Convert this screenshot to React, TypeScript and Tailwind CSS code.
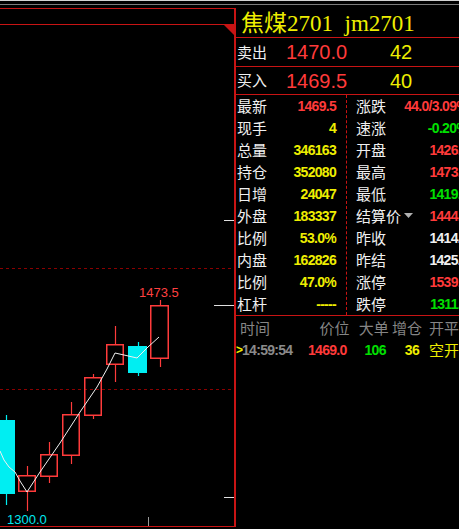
import React from "react";

const RED = "#ff3a3a";
const YELLOW = "#eeee00";
const GREEN = "#00e000";
const LINE = "#c81414";

type Candle = {
  x0: number;
  x1: number;
  top: number;
  bot: number;
  hi: number;
  lo: number;
  up: boolean;
};

// page coordinates, svg viewBox is shifted to match
const candles: Candle[] = [
  { x0: -3, x1: 15, top: 421, bot: 495, hi: 416, lo: 506, up: false },
  { x0: 18, x1: 36, top: 476, bot: 493, hi: 467, lo: 512, up: true },
  { x0: 40, x1: 58, top: 455, bot: 478, hi: 443, lo: 484, up: true },
  { x0: 62, x1: 80, top: 415, bot: 457, hi: 403, lo: 465, up: true },
  { x0: 84, x1: 102, top: 378, bot: 417, hi: 375, lo: 420, up: true },
  { x0: 106, x1: 124, top: 345, bot: 366, hi: 327, lo: 383, up: true },
  { x0: 128, x1: 147, top: 347, bot: 374, hi: 343, lo: 377, up: false },
  { x0: 150, x1: 169, top: 306, bot: 360, hi: 301, lo: 368, up: true },
];

const maLine =
  "0,452 4,461 9,468 15,473 20,482 27,493 40,473 60,444 80,413 97,388 107,370 115,354 124,356 137,359 148,348 159,338";

function KChart() {
  return (
    <svg width={234} height={501} viewBox="0 26 234 501" className="block">
      <polygon points="224,26 234,26 234,36" fill={LINE} />
      <line x1={0} y1={269.5} x2={234} y2={269.5} stroke="#8a0000" strokeDasharray="3 3" />
      <line x1={0} y1={390.5} x2={234} y2={390.5} stroke="#8a0000" strokeDasharray="3 3" />
      <line x1={224} y1={221.5} x2={234} y2={221.5} stroke="#e0e0e0" />
      <line x1={214} y1={306.5} x2={234} y2={306.5} stroke="#e0e0e0" />
      <line x1={224} y1={498.5} x2={234} y2={498.5} stroke="#e0e0e0" />
      <line x1={148.5} y1={518} x2={148.5} y2={527} stroke="#9a9a9a" />
      {candles.map((c, i) => {
        const cx = Math.round((c.x0 + c.x1) / 2) + 0.5;
        const color = c.up ? "#ff3b3b" : "#00eef2";
        return (
          <g key={i}>
            <line x1={cx} y1={c.hi} x2={cx} y2={c.top} stroke={color} strokeWidth={1.2} />
            <line x1={cx} y1={c.bot} x2={cx} y2={c.lo} stroke={color} strokeWidth={1.2} />
            {c.up ? (
              <rect
                x={c.x0 + 0.75}
                y={c.top + 0.75}
                width={c.x1 - c.x0 - 1.5}
                height={c.bot - c.top - 1.5}
                fill="none"
                stroke={color}
                strokeWidth={1.5}
              />
            ) : (
              <rect x={c.x0} y={c.top} width={c.x1 - c.x0} height={c.bot - c.top} fill={color} />
            )}
          </g>
        );
      })}
      <polyline points={maLine} fill="none" stroke="#f0f0f0" strokeWidth={1} />
      <text
        x={139}
        y={298}
        fill="#ff4040"
        fontSize={13}
        fontFamily="'Liberation Sans', Arial, sans-serif"
      >
        1473.5
      </text>
      <text
        x={7}
        y={525}
        fill="#00e8f0"
        fontSize={13}
        fontFamily="'Liberation Sans', Arial, sans-serif"
      >
        1300.0
      </text>
    </svg>
  );
}

const leftRows: [string, string, string][] = [
  ["最新", "1469.5", RED],
  ["现手", "4", YELLOW],
  ["总量", "346163", YELLOW],
  ["持仓", "352080", YELLOW],
  ["日增", "24047", YELLOW],
  ["外盘", "183337", YELLOW],
  ["比例", "53.0%", YELLOW],
  ["内盘", "162826", YELLOW],
  ["比例", "47.0%", YELLOW],
  ["杠杆", "-----", YELLOW],
];

const rightRows: [string, string, string][] = [
  ["涨跌", "44.0/3.09%", RED],
  ["速涨", "-0.20%", GREEN],
  ["开盘", "1426.0", RED],
  ["最高", "1473.5", RED],
  ["最低", "1419.0", GREEN],
  ["结算价", "1444.5", RED],
  ["昨收", "1414.0", "#f0f0f0"],
  ["昨结", "1425.0", "#f0f0f0"],
  ["涨停", "1539.0", RED],
  ["跌停", "1311.0", GREEN],
];

const cjk = "font-['Noto_Sans_CJK_SC',sans-serif]";
const num = "font-['Liberation_Sans',Arial,sans-serif] font-bold text-[14px] tracking-[-0.7px]";

export default function App() {
  return (
    <div className="w-[459px] h-[529px] bg-black overflow-hidden">
      {/* top window strip */}
      <div className="h-px bg-[#d2d2d2]" />
      <div className="h-[3px]" />
      <div className="h-px bg-[#7c7c7c]" />
      <div className="h-[3px]" />

      <div className="flex">
        {/* chart */}
        <div className="w-[236px] shrink-0 flex flex-col border-t border-b border-r-2 border-[#c81414]">
          <div className="h-[16px] border-b border-[#c81414]" />
          <KChart />
        </div>

        {/* quote panel */}
        <div className="flex-1 flex flex-col min-w-0">
          <div className="h-[30px] border-b border-[#c81414] flex items-center pl-[5px] pt-px">
            <span className="text-[23px] leading-none text-[#eeee00] whitespace-pre font-['Liberation_Serif','Noto_Sans_CJK_SC',serif]">
              焦煤2701  jm2701
            </span>
          </div>

          <div className="h-[29px] border-b border-[#c81414] flex items-center">
            <span className={`w-[50px] pl-px text-[15px] text-[#f0f0f0] ${cjk}`}>卖出</span>
            <span className="w-[104px] text-[20px] text-[#ff3a3a] font-['Liberation_Sans',Arial,sans-serif]">1470.0</span>
            <span className="text-[20px] text-[#eeee00] font-['Liberation_Sans',Arial,sans-serif]">42</span>
          </div>
          <div className="h-[28px] border-b border-[#c81414] flex items-center">
            <span className={`w-[50px] pl-px text-[15px] text-[#f0f0f0] ${cjk}`}>买入</span>
            <span className="w-[104px] text-[20px] text-[#ff3a3a] font-['Liberation_Sans',Arial,sans-serif]">1469.5</span>
            <span className="text-[20px] text-[#eeee00] font-['Liberation_Sans',Arial,sans-serif]">40</span>
          </div>

          <div className="flex border-b border-[#c81414]">
            <div className="w-[110px] shrink-0 flex flex-col">
              {leftRows.map(([label, value, color], i) => (
                <div key={i} className="h-[22px] flex items-center justify-between pr-[10px]">
                  <span className={`pl-px text-[15px] text-[#f0f0f0] ${cjk}`}>{label}</span>
                  <span className={num} style={{ color }}>
                    {value}
                  </span>
                </div>
              ))}
            </div>
            <div className="border-l border-dashed border-[#c81414]" />
            <div className="w-[121px] shrink-0 flex flex-col">
              {rightRows.map(([label, value, color], i) => (
                <div key={i} className="h-[22px] flex items-center justify-between">
                  <span className={`pl-[9px] flex items-center gap-[3px] text-[15px] text-[#f0f0f0] ${cjk}`}>
                    {label}
                    {label === "结算价" && (
                      <svg width={9} height={6} viewBox="0 0 9 6">
                        <polygon points="0,0 9,0 4.5,5" fill="#b0b0b0" />
                      </svg>
                    )}
                  </span>
                  <span className={num} style={{ color }}>
                    {value}
                  </span>
                </div>
              ))}
            </div>
          </div>

          {/* ticks */}
          <div className={`h-[24px] flex items-center text-[15px] text-[#858585] ${cjk}`}>
            <span className="w-[64px] pl-[4px]">时间</span>
            <span className="w-[52px] text-right">价位</span>
            <span className="w-[40px] text-right">大单</span>
            <span className="w-[34px] text-right">增仓</span>
            <span className="pl-[7px] whitespace-nowrap">开平</span>
          </div>
          <div className="h-[20px] flex items-center">
            <span className="w-[64px] flex items-center">
              <span className="w-[6px] text-[12px] font-bold leading-none text-[#eeee00] font-['Liberation_Sans',Arial,sans-serif]">&gt;</span>
              <span className={`${num} text-[#8a8a8a]`}>14:59:54</span>
            </span>
            <span className={`w-[49px] text-right ${num}`} style={{ color: RED }}>1469.0</span>
            <span className={`w-[40px] text-right ${num}`} style={{ color: GREEN }}>106</span>
            <span className={`w-[34px] text-right ${num}`} style={{ color: YELLOW }}>36</span>
            <span className={`pl-[10px] text-[15px] text-[#eeee00] whitespace-nowrap ${cjk}`}>空开</span>
          </div>
        </div>
      </div>
    </div>
  );
}
